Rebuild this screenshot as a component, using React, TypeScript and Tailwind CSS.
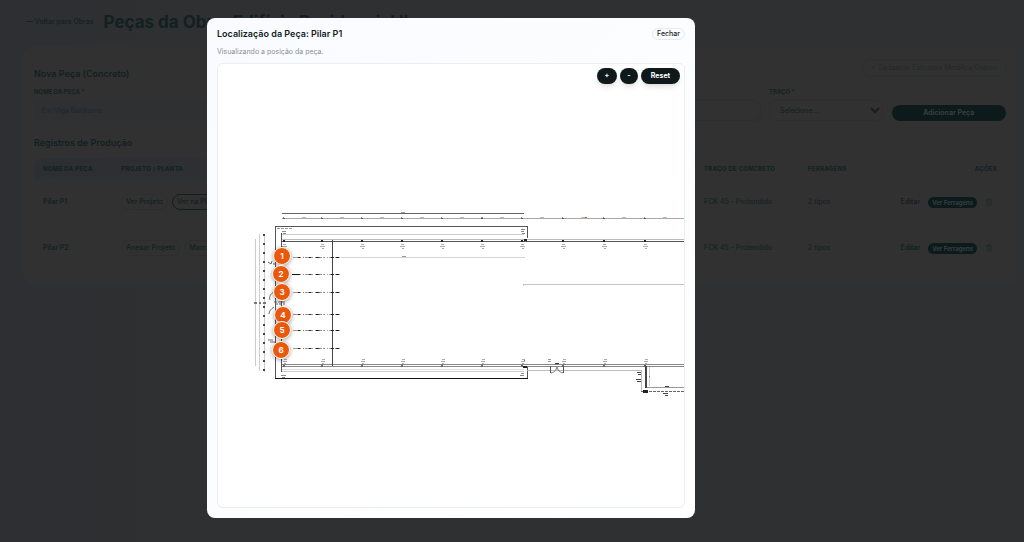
import React, { useState } from 'react';
import { Trash2 } from 'lucide-react';

interface Piece {
  id: number;
  name: string;
  project: string;
  plan: string;
  mix: string;
  rebar: string;
}

interface Pin {
  id: number;
  x: number;
  y: number;
}

const pieces: Piece[] = [
  { id: 1, name: 'Pilar P1', project: 'Ver Projeto', plan: 'Ver na Planta', mix: 'FCK 45 - Protendido', rebar: '2 tipos' },
  { id: 2, name: 'Pilar P2', project: 'Anexar Projeto', plan: 'Marcar na Planta', mix: 'FCK 45 - Protendido', rebar: '2 tipos' },
];

// Positions in drawing units
const pins: Pin[] = [
  { id: 1, x: 64, y: 192 },
  { id: 2, x: 63, y: 210 },
  { id: 3, x: 64, y: 228 },
  { id: 4, x: 65, y: 251 },
  { id: 5, x: 64, y: 266 },
  { id: 6, x: 63, y: 286 },
];

const axes = [68, 106, 146, 186, 226, 266, 306];
const farAxes = [347, 388, 429];
const beams = [193, 210, 228, 250, 266, 284];

const App: React.FC = () => {
  const [open, setOpen] = useState(true);

  return (
    <div className="min-h-screen bg-linear-to-r from-[#2d2f32] to-[#2f3031] to-20% font-['Inter','Liberation_Sans',sans-serif] text-[#13201f]">
      <PiecesPage onShowPlan={() => setOpen(true)} />
      {open && <LocationDialog piece="Pilar P1" onClose={() => setOpen(false)} />}
    </div>
  );
};

const PiecesPage = ({ onShowPlan }: { onShowPlan: () => void }) => (
  <main className="pl-[23px] pr-[7px] pt-[10px]">
    <header className="flex h-6 items-center gap-[10px] whitespace-nowrap pl-[3px]">
      <a href="#obras" className="text-[7px] font-medium">— Voltar para Obras</a>
      <h1 className="text-[17px] font-bold leading-6">Peças da Obra: Edifício Residencial II</h1>
    </header>

    <section className="mt-[13px] rounded-lg bg-[#313131] px-[11px] pb-3 pt-3">
      <div className="flex items-start justify-between">
        <h2 className="pt-[9px] text-[9px] font-semibold leading-3">Nova Peça (Concreto)</h2>
        <button type="button" className="h-[18px] rounded-full border border-[#2d2f2f] px-2 text-[7px] text-[#222a2a]">
          + Cadastrar Estrutura Metálica/Outros
        </button>
      </div>

      <form className="mt-2 grid grid-cols-8 items-end gap-2" onSubmit={e => e.preventDefault()}>
        <label className="col-span-2 text-[6px] font-semibold leading-2">
          NOME DA PEÇA *
          <input
            className="mt-1 block h-[21px] w-full rounded-md bg-[#2e3032] px-2 text-[7px] font-normal placeholder:text-[#202829]"
            placeholder="Ex: Viga Baldrame"
          />
        </label>
        <input
          aria-label="Quantidade"
          className="col-span-4 h-[21px] rounded-md border border-[#2d2f2f]"
        />
        <label className="text-[6px] font-semibold leading-2">
          TRAÇO *
          <select className="mt-1 block h-[21px] w-full rounded-md border border-[#2d2f2f] bg-[#313131] pl-1.5 text-[7px] font-normal">
            <option>Selecione...</option>
          </select>
        </label>
        <button type="submit" className="h-4 rounded-full bg-[#0d1a1c] text-[7px] font-semibold text-[#3b4242]">
          Adicionar Peça
        </button>
      </form>

      <h2 className="mt-4 text-[9px] font-semibold leading-3">Registros de Produção</h2>
      <div className="mt-[9px] overflow-hidden rounded-lg border border-[#2e3031]">
        <table className="w-full table-fixed whitespace-nowrap text-left text-[7px]">
          <colgroup>
            <col className="w-[78px]" />
            <col className="w-[180px]" />
            <col />
            <col className="w-[104px]" />
            <col className="w-[88px]" />
            <col className="w-[117px]" />
          </colgroup>
          <thead className="bg-linear-to-r from-[#2c2f32] to-[#313131] to-60% text-[6px] tracking-wider">
            <tr className="h-5">
              <th className="pl-2">NOME DA PEÇA</th>
              <th className="pl-2">PROJETO / PLANTA</th>
              <td />
              <th className="pl-2">TRAÇO DE CONCRETO</th>
              <th className="pl-2">FERRAGENS</th>
              <th className="pr-2 text-right">AÇÕES</th>
            </tr>
          </thead>
          <tbody>
            {pieces.map(piece => (
              <tr key={piece.id} className="h-[46px] border-t border-[#2e3031]">
                <td className="pl-2 font-semibold">{piece.name}</td>
                <td className="pl-2">
                  <div className="flex gap-1 font-medium">
                    <button type="button" className="h-4 rounded-full border border-[#2d2f2f] px-1">{piece.project}</button>
                    <button
                      type="button"
                      className={`h-4 rounded-full border px-1 ${piece.id === 1 ? 'border-[#13201f]' : 'border-[#2d2f2f]'}`}
                      onClick={onShowPlan}
                    >
                      {piece.plan}
                    </button>
                  </div>
                </td>
                <td />
                <td className="pl-2">{piece.mix}</td>
                <td className="pl-2">{piece.rebar}</td>
                <td className="pr-2">
                  <div className="flex items-center justify-end gap-1 font-semibold">
                    <button type="button" className="px-1">Editar</button>
                    <button type="button" className="h-[11px] rounded-full bg-[#0d1a1c] px-1 text-[6px] text-[#3b4242]">Ver Ferragens</button>
                    <button type="button" aria-label="Excluir" className="px-1 text-[#222a2a]"><Trash2 className="h-2 w-2" /></button>
                  </div>
                </td>
              </tr>
            ))}
          </tbody>
        </table>
      </div>
    </section>
  </main>
);

const LocationDialog = ({ piece, onClose }: { piece: string; onClose: () => void }) => {
  const [scale, setScale] = useState(1);
  const control = 'h-4 rounded-full bg-[#0f191b] text-[7px] font-bold text-white shadow-md';

  return (
    <div className="fixed inset-0 flex justify-center pb-6 pl-4 pr-[138px] pt-[18px]">
      <div
        role="dialog"
        aria-label={`Localização da Peça: ${piece}`}
        className="flex w-full max-w-[488px] flex-col rounded-lg bg-linear-to-br from-[#f9fbfe] to-white px-[10px] pb-[10px] pt-[9px]"
      >
        <div className="flex items-center justify-between">
          <h2 className="text-[9px] font-semibold leading-[14px] text-[#141c1e]">Localização da Peça: {piece}</h2>
          <button type="button" className="h-3 rounded-full border border-[#e6eaec] px-1 text-[7px] font-medium leading-2 text-[#141c1e]" onClick={onClose}>
            Fechar
          </button>
        </div>
        <p className="mt-1.5 text-[7px] leading-[10px] text-[#8a8f93]">Visualizando a posição da peça.</p>

        <div className="relative mt-1.5 flex-1 overflow-hidden rounded-md border border-[#e9eef1] bg-white">
          <div className="absolute left-0 top-0 h-[444px] w-[468px]" style={{ transform: `scale(${scale})` }}>
            <FloorPlan />
            {pins.map(pin => (
              <button
                key={pin.id}
                type="button"
                className="absolute h-[18px] w-[18px] -translate-x-1/2 -translate-y-1/2 rounded-full border border-white bg-[#ea580c] text-[8px] font-bold leading-4 text-white shadow-[0_1px_4px_rgba(0,0,0,0.4)]"
                style={{ left: pin.x, top: pin.y }}
              >
                {pin.id}
              </button>
            ))}
          </div>
          <div className="absolute right-1 top-1 flex gap-[3px]">
            <button type="button" className={`${control} w-5`} onClick={() => setScale(scale + 0.2)}>+</button>
            <button type="button" className={`${control} w-[18px]`} onClick={() => setScale(Math.max(0.4, scale - 0.2))}>-</button>
            <button type="button" className={`${control} w-[39px]`} onClick={() => setScale(1)}>Reset</button>
          </div>
        </div>
      </div>
    </div>
  );
};

const FloorPlan = () => (
  <svg className="block h-full w-full" viewBox="0 0 468 444" fill="none" shapeRendering="crispEdges">
    {/* Dimension lines */}
    <path d="M64 149.5H306" stroke="#666" />
    <path d="M64 154.5H468" stroke="#aaa" />
    <path d="M37.5 175V302" stroke="#ccc" />
    <path d="M41.5 170V307M46.5 170V308" stroke="#ccc" />
    <path d="M46 170V308" stroke="#444" strokeWidth="2" strokeDasharray="2 7" />
    <path d="M36 238.5h3M41 238.5h2M45 238.5h3" stroke="#777" strokeWidth="2" />
    <path d="M183 148.5h4" stroke="#999" />

    {/* Outer walls */}
    <path d="M309.5 174V162.5H57.5V314.5" stroke="#555" />
    <path d="M309.5 302V315" stroke="#555" />
    <path d="M57 314.5H310" stroke="#111" />
    <path d="M63.5 169V308" stroke="#555" />
    <path d="M64 170.5H306M64 307.5H306" stroke="#ccc" />
    <path d="M64 175.5H468" stroke="#bbb" />
    <path d="M64 177.5H468" stroke="#555" />
    <path d="M64 300.5H468M64 302.5H468" stroke="#888" />
    <path d="M64 305.5H306" stroke="#ddd" />
    <path d="M114.5 176V302" stroke="#444" />
    <path d="M59 164.5H75" stroke="#999" strokeDasharray="3 1" />

    {axes.concat(farAxes).map(x => (
      <g key={x} stroke="#aaa">
        <path d={`M${x - 3} 154.5h2`} stroke="#555" />
        <path d={`M${x - 3} 153.5h1`} stroke="#999" />
        <path d={`M${x - 3} 177h2`} stroke="#222" strokeWidth="2" />
        <path d={`M${x - 3} 302h2`} stroke="#666" strokeWidth="2" />
        <path d={`M${x - 3} 180.5h3M${x - 4} 182.5h5M${x - 2} 184.5h2`} />
        <path d={`M${x - 2} 295.5h3M${x - 3} 297.5h4M${x - 2} 299.5h2`} />
        <path d={`M${x + 16} 153.5h4`} stroke="#bbb" />
      </g>
    ))}
    <path d="M367 153.5h2M264 153.5h1M306 296.5h1" stroke="#ea580c" />

    {/* Beam callouts */}
    {beams.map(y => (
      <g key={y}>
        <path d={`M75 ${y + 0.5}H123`} stroke="#999" strokeDasharray="5 1 2 2 1 1" />
        <path d={`M80 ${y + 0.5}h2M91 ${y + 0.5}h2M98 ${y + 0.5}h3M113 ${y + 0.5}h3M118 ${y + 0.5}h3`} stroke="#222" />
        <path d={`M85 ${y + 0.5}h1M101 ${y + 0.5}h1`} stroke="#ea580c" />
      </g>
    ))}
    <path d="M74 210.5h7" stroke="#111" />
    <path d="M123 193.5H307" stroke="#d4d4d4" />
    <path d="M184 192.5h4" stroke="#999" />
    <path d="M305.5 222V220.5H468" stroke="#c4c4c4" />

    {/* Corner notes */}
    <path d="M64 167.5h4M65 169.5h3M303 165.5h4M303 167.5h3M304 169.5h3M303 309.5h3M302 311.5h4M63 311.5h5M64 313.5h3" stroke="#888" />
    <path d="M306 175.5h3M305 302.5h4" stroke="#222" strokeWidth="2" />
    <g shapeRendering="auto" stroke="#666">
      <path d="M50 198l3 2 1-3M55 200h3M50 276h5M52 278h5M56 243c-3 2-5 4-5 7M56 228c-4 2-5 5-4 8" />
      <path d="M56 238h12M57 240h10" strokeDasharray="3 1" />
    </g>

    {/* Door and side room */}
    <path d="M309 306.5H423.5V327.5" stroke="#bbb" />
    <path d="M332.5 302V309M345.5 302V309" stroke="#555" />
    <path d="M333 309c4-1 5-3 6-6 1 3 2 5 6 6" stroke="#777" shapeRendering="auto" />
    <path d="M337 299.5h4" stroke="#333" />
    <path d="M330 295.5h3M330 297.5h3" stroke="#999" />
    <path d="M428 302V324" stroke="#444" strokeWidth="2" />
    <path d="M431.5 303V322" stroke="#ccc" />
    <path d="M429 323.5H468" stroke="#999" />
    <path d="M423 327.5H468" stroke="#666" strokeDasharray="3 1" />
    <path d="M425 327.5h5" stroke="#222" strokeWidth="3" />
    <path d="M419 308.5h4M420 310.5h3M418 315.5h5M419 317.5h4M445 329.5h5M447 331.5h3M447 322.5h4" stroke="#444" />
    <path d="M431 312h1" stroke="#ea580c" />
  </svg>
);

export default App;
